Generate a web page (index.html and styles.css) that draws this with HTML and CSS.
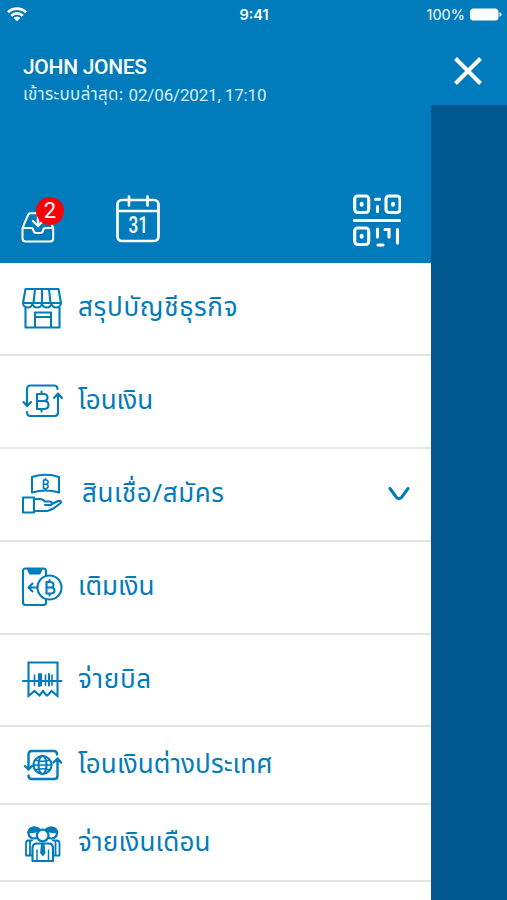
FILE: index.html
```html
<!DOCTYPE html>
<html lang="th">
<head>
  <meta charset="UTF-8">
  <meta name="viewport" content="width=device-width, initial-scale=1.0">
  <title>Menu</title>
  <link rel="stylesheet" href="styles.css">
</head>
<body>

<div class="screen">
  <div class="status">
    <svg class="wifi" width="20" height="15" viewBox="0 0 20 15" fill="none" stroke="#fff" stroke-width="2.8">
      <path d="M1 5.2a13 13 0 0 1 18 0M4.2 8.8a8.3 8.3 0 0 1 11.6 0"/>
      <path d="M10 14.2L6.600 11a5 5 0 0 1 6.800 0z" fill="#fff" stroke="none"/>
    </svg>
    <span class="clock">9:41</span>
    <span class="percent">100%</span>
    <svg class="battery" width="32" height="13" viewBox="0 0 32 13" fill="#fff">
      <rect x="0" y="0.5" width="28.5" height="12" rx="3.5"/>
      <path d="M29.5 4.3q2 .4 2 2.2t-2 2.2z"/>
    </svg>
  </div>

  <div class="profile">
    <div class="user">
      <div class="name">JOHN JONES</div>
      <div class="last"><span class="last-label">เข้าระบบล่าสุด:</span> <span class="last-date">02/06/2021, 17:10</span></div>
    </div>
    <svg class="close" width="28" height="28" viewBox="0 0 28 28" stroke="#fff" stroke-width="4">
      <path d="M1.5 1.5l25 25M26.5 1.5l-25 25"/>
    </svg>
  </div>

  <div class="content">
    <div class="drawer">
      <div class="tools">
        <div class="inbox">
          <svg width="34" height="32" viewBox="0 0 34 32" fill="none" stroke="#fff" stroke-width="2" stroke-linecap="round" stroke-linejoin="round">
            <path d="M1.5 17L7 4q.7-1.7 2.5-1.7h15q1.5 0 2.200 1.7l5.500 13v10.500q0 3-3 3h-24.700q-3 0-3-3zM1.500 17H10q2 0 2.500 2.500t2.500 2.500h4.500q2 0 2.500-2.500t2.500-2.500h7.500"/>
            <path d="M17 3v12M12 10l5 5 5-5" stroke-width="2.400"/>
          </svg>
          <span class="badge">2</span>
        </div>
        <svg class="calendar" width="44" height="48" viewBox="0 0 44 48" fill="none" stroke="#fff" stroke-width="2.700" stroke-linecap="round">
          <rect x="1.500" y="5" width="41" height="41" rx="4.500"/>
          <path d="M2 16h40M13 1.500v9M31.500 1.500v9"/>
          <text x="12.500" y="37.500" class="day" textLength="19.500" lengthAdjust="spacingAndGlyphs">31</text>
        </svg>
        <svg class="qr" width="48" height="53" viewBox="0 0 48 53" fill="none" stroke="#fff" stroke-width="3.100" stroke-linecap="round">
          <rect x="1.700" y="2" width="14" height="16.500" rx="3"/>
          <rect x="33" y="2" width="14" height="16.500" rx="3"/>
          <rect x="1.700" y="34" width="14" height="16.500" rx="3"/>
          <path d="M1.500 26.500h45M22.500 5.200h4M24.500 12.500v5M24.500 35v8M25 51h5M32 35.500h4V43M44.500 35.500v13.500"/>
          <path d="M8.700 9.700v1M40 9.700v1M8.700 41.700v1" stroke-width="4"/>
        </svg>
      </div>

      <div class="item">
        <svg class="icon" viewBox="0 0 42 42">
          <path d="M4.500 2h33L40 16H2zM14 2l-1.500 14M21 2v14M28 2l1.500 14"/>
          <path d="M2 16c0 6 9.500 6 9.500 0 0 6 9.500 6 9.500 0 0 6 9.500 6 9.500 0 0 6 9.500 6 9.500 0M4.500 21v19.500h34V21M14 40V25.500h16V40M14 30h16"/>
        </svg>
        <span class="label w1">สรุปบัญชีธุรกิจ</span>
      </div>
      <div class="item">
        <svg class="icon" viewBox="0 0 42 42">
          <path d="M6 26V9q0-3.500 3.500-3.500H33q3.500 0 3.500 3.500M2.500 22l3.500 4 4-4M6 32q0 4 3.500 4h24q3.500 0 3.500-3.500V14M33 18l4-4.500 4 4.500"/>
          <path d="M16 14v15M16 14h6.500q4 0 4 3.500t-4 3.500H16h7q4.500 0 4.500 4T23 29h-7M20.500 11.500V14M20.500 29v2.500"/>
        </svg>
        <span class="label w2">โอนเงิน</span>
      </div>
      <div class="item">
        <svg class="icon" viewBox="0 0 42 42">
          <path d="M11 4q14-4.500 27 0v15.500q-13-4-27 0zM2 24.500h11v15H2zM13 26h6q3 0 5 2.500h5q3 1 1 3.500h-6M31 31l6-3q3.500-.5 3 1.500-8 7.500-14 8.500H13"/>
          <path d="M22.500 7v8.500M22.500 7h3q3.500 2 0 4.200h-3 3q3.500 2.100 0 4.300h-3M24.500 5.500V7M24.500 15.500V17" stroke-width="1.600"/>
        </svg>
        <span class="label w3">สินเชื่อ/สมัคร</span>
        <svg class="chevron" width="22" height="14" viewBox="0 0 22 14"><path d="M2 1.500l6.500 9q2.500 2.500 5 0l6.500-9"/></svg>
      </div>
      <div class="item">
        <svg class="icon" viewBox="0 0 42 42">
          <path d="M25 9V5q0-2.500-2.500-2.500H4.500Q2 2.500 2 5v31.500Q2 39 4.500 39h18q2.500 0 2.500-2.500V34"/>
          <path d="M7 3l2 4.500h9.500l2-4.500z" fill="#007bbb"/>
          <circle cx="28.500" cy="21.500" r="12"/>
          <path d="M16 21.500H8M11.500 17.500l-4 4 4 4M25.500 16v11.500M25.500 16h4q3 0 3 2.800t-3 2.700h-4 4.500q3.500 0 3.500 3t-3.500 3h-4.500M28.500 14v2M28.500 27.500v2"/>
        </svg>
        <span class="label w4">เติมเงิน</span>
      </div>
      <div class="item">
        <svg class="icon" viewBox="0 0 42 42">
          <path d="M7.500 3.500h29v33.500l-6-5-4 4.500h-1l-3.500-4.500-3.500 4.500-5-4.500-6 5zM2 22h38.500" stroke-linejoin="miter"/>
          <path d="M13.500 16v10.500M24.500 16v10.500M31 16v10.500" stroke-width="1.600"/>
          <path d="M18 15v12M20 15v11.500M28 15v11.500"/>
        </svg>
        <span class="label w5">จ่ายบิล</span>
      </div>
      <div class="item short">
        <svg class="icon" viewBox="0 0 42 42">
          <path d="M7.500 25.500V10.500q0-3.500 3.500-3.500h22q3 0 3 3.500M4 22l3.500 3.500L11 22M7.500 31.500q0 3.500 3.500 3.500h22.500q3 0 3-3V15M32.500 18.500l4-4 3.500 4" stroke-width="2.400"/>
          <circle cx="21.500" cy="21" r="9"/>
          <ellipse cx="21.500" cy="21" rx="4" ry="9"/>
          <path d="M12.500 21h18M14.500 16q7 2.500 14 0M14.500 26q7-2.500 14 0" stroke-width="1.500"/>
        </svg>
        <span class="label w6">โอนเงินต่างประเทศ</span>
      </div>
      <div class="item short">
        <svg class="icon" viewBox="0 0 42 42">
          <g stroke-width="2.200">
            <path d="M11 18.500H7.500q-2.500 0-2.500 3v12h6M32 18.500h4q2.500 0 2.500 3v12H32M9 18.500v15M34.500 18.500v15" stroke-width="1.800"/>
            <circle cx="13" cy="11" r="5.500"/>
            <circle cx="30.500" cy="11" r="5.500"/>
            <path d="M6 11q1-6.500 7-6.500 5 0 7 3-6 5-14 3.500zM37.500 11q-1-6.500-7-6.500-5 0-7 3 6 5 14 3.500z" class="solid"/>
            <circle cx="21.700" cy="13.500" r="5.800" fill="#fff"/>
            <path d="M16 21.500h11.500q4.500 0 4.500 4.500v13H11.500V26q0-4.500 4.500-4.500z" fill="#fff"/>
            <path d="M16 28v10.500M27.500 28v10.500" stroke-width="1.500"/>
            <path d="M20 22h3.500l1 9-2.700 3.500-2.700-3.500z" class="solid"/>
          </g>
        </svg>
        <span class="label w7">จ่ายเงินเดือน</span>
      </div>
    </div>
    <div class="shade"></div>
  </div>
</div>

</body>
</html>
```
FILE: styles.css
```css
* {
  margin: 0;
  padding: 0;
  box-sizing: border-box;
}

body {
  font-family: "Noto Sans Thai", "Open Sans", "Noto Sans", sans-serif;
  overflow: hidden;
}

.screen {
  width: 507px;
  height: 900px;
  background-color: #007bbb;
  color: white;
  display: flex;
  flex-direction: column;
}

.status {
  height: 28px;
  padding: 0 5px 0 7px;
  display: grid;
  grid-template-columns: 190px 104px 1fr 32px;
  align-items: center;
  column-gap: 5px;
  font-family: Inter, sans-serif;
  font-size: 14.5px;
}

.clock {
  text-align: center;
  font-weight: 600;
}

.percent {
  text-align: right;
}

.profile {
  height: 77px;
  padding: 0 25px 0 23px;
  display: flex;
  justify-content: space-between;
  align-items: flex-start;
}

.user {
  padding-top: 26px;
}

.name {
  font-family: Roboto, sans-serif;
  font-size: 21px;
  line-height: 26px;
  font-weight: 500;
  letter-spacing: -0.3px;
  white-space: nowrap;
}

.last {
  display: flex;
  gap: 5px;
  font-size: 17px;
  line-height: 31px;
  white-space: nowrap;
  color: #d5efff;
}

.last-label {
  letter-spacing: 0.3px;
}

.last-date {
  font-family: Roboto, sans-serif;
  font-size: 17px;
  letter-spacing: -0.15px;
}

.close {
  margin-top: 29px;
}

.content {
  flex: 1;
  display: flex;
}

.drawer {
  width: 431px;
  background-color: white;
}

.shade {
  flex: 1;
  background-color: #00578f;
}

.tools {
  height: 158px;
  padding: 0 30px 16px 21px;
  background-color: #007bbb;
  display: flex;
  align-items: flex-end;
}

.inbox {
  position: relative;
  width: 34px;
  height: 36px;
}

.badge {
  position: absolute;
  left: 15px;
  top: -14px;
  width: 28px;
  height: 28px;
  border-radius: 50%;
  background-color: #fb0007;
  font-family: Roboto, sans-serif;
  font-size: 22px;
  line-height: 28px;
  text-align: center;
}

.calendar {
  margin-left: 61px;
  margin-bottom: 4px;
}

.day {
  font-family: Roboto, sans-serif;
  font-size: 23px;
  font-weight: 500;
  fill: white;
  stroke: none;
}

.qr {
  margin-left: auto;
}

.item {
  height: 92.9px;
  padding: 0 21px;
  border-bottom: 2px solid #e1e3e5;
  display: flex;
  align-items: center;
  color: #007bbb;
}

.short {
  height: 77.5px;
}

.icon {
  width: 42px;
  height: 42px;
  fill: none;
  stroke: #007bbb;
  stroke-width: 2.1;
  stroke-linejoin: round;
  stroke-linecap: round;
}

.solid {
  fill: #007bbb;
  stroke: none;
}

.label {
  margin-left: 15px;
  font-size: 26px;
  line-height: 40px;
  white-space: nowrap;
}

.w1 {
  letter-spacing: 0.7px;
}

.w3 {
  margin-left: 19px;
  letter-spacing: 0.6px;
}

.w5 {
  letter-spacing: 0.7px;
}

.w6 {
  letter-spacing: 0.1px;
}

.w7 {
  letter-spacing: 0.2px;
}

.chevron {
  margin-left: auto;
  fill: none;
  stroke: #007bbb;
  stroke-width: 3;
  stroke-linecap: round;
}
```
